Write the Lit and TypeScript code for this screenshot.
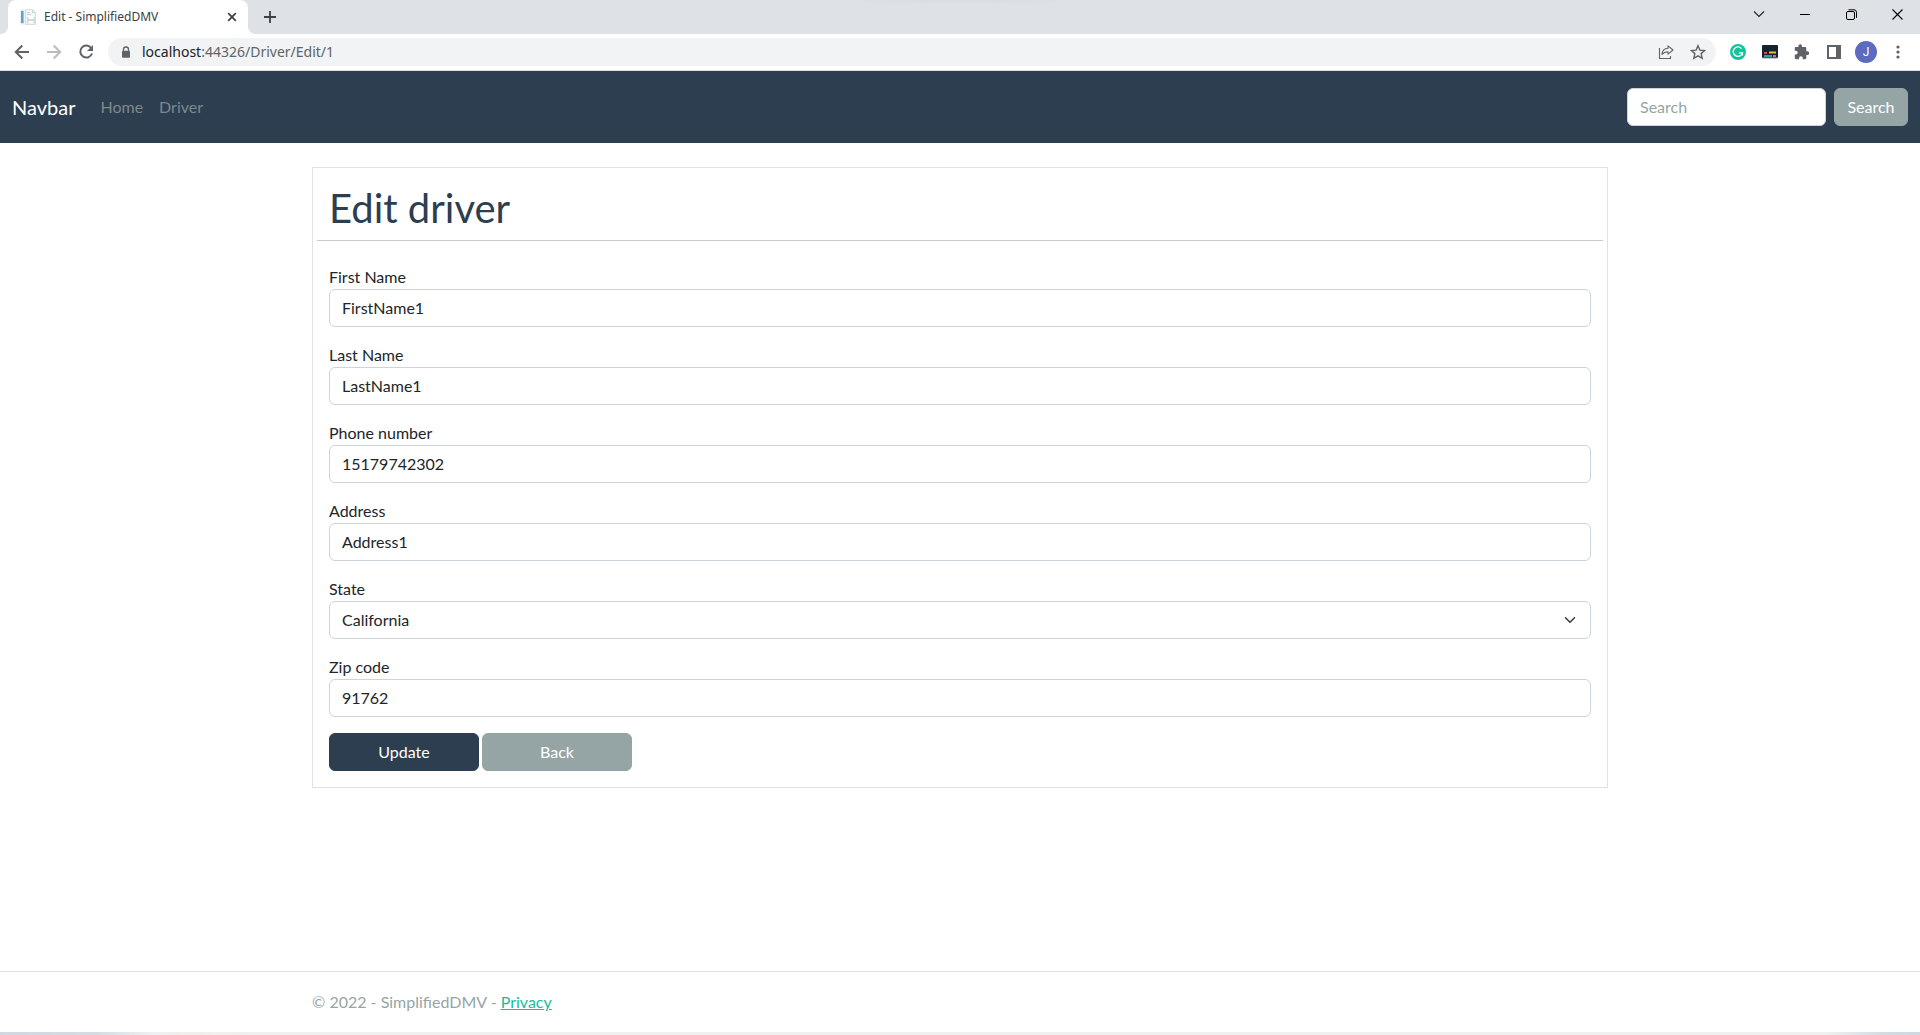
import { LitElement, html, css, svg } from "lit";
import { customElement } from "lit/decorators.js";

interface Field {
  id: string;
  label: string;
  value: string;
  options?: string[];
}

const FIELDS: Field[] = [
  { id: "first-name", label: "First Name", value: "FirstName1" },
  { id: "last-name", label: "Last Name", value: "LastName1" },
  { id: "phone", label: "Phone number", value: "15179742302" },
  { id: "address", label: "Address", value: "Address1" },
  { id: "state", label: "State", value: "California", options: ["California"] },
  { id: "zip", label: "Zip code", value: "91762" },
];

const icon = (size: number, body: unknown) => html`
  <svg width=${size} height=${size} viewBox="0 0 ${size} ${size}" fill="none" aria-hidden="true">${body}</svg>
`;

const ICONS = {
  page: icon(16, svg`
    <path d="M5.500 .5h7l3 3v12h-10z" fill="#f4f6f8" stroke="#d8dee4"/>
    <path d="M.5 .5h4v15h-4z" fill="#e3e9ee"/><path d="M1 2h2.500v12H1z" fill="#5ba3d4"/>
    <path d="M7 3.500h3M7 5.500h4M12.500 1v2.500h3" stroke="#c8d1da"/>
    <path d="M7 8h8.500v6.500H7z" fill="#d3d9e0"/><path d="M8.500 7h5v3h-5zM8.500 12h5v2.500h-5z" fill="#fff"/>`),
  close: icon(10, svg`<path d="M1.200 1.200l7.600 7.600M8.800 1.200L1.200 8.800" stroke="#3c4043" stroke-width="1.700"/>`),
  plus: icon(12, svg`<path d="M6 0v12M0 6h12" stroke="#3c4043" stroke-width="1.800"/>`),
  chevron: icon(12, svg`<path d="M1 3.500l5 5 5-5" stroke="#202124" stroke-width="1.100"/>`),
  minimize: icon(10, svg`<path d="M0 5.500h10" stroke="#000"/>`),
  restore: icon(11, svg`
    <rect x=".5" y="2.500" width="8" height="8" rx="1.500" stroke="#000"/>
    <path d="M2.500 .8h5.500a2.500 2.500 0 0 1 2.500 2.500v5.500" stroke="#000"/>`),
  exit: icon(11, svg`<path d="M.5 .5l10 10M10.500 .5l-10 10" stroke="#000" stroke-width="1.100"/>`),
  back: icon(16, svg`<path d="M15 8H2M8.300 1.500L1.800 8l6.500 6.500" stroke="#5f6368" stroke-width="2"/>`),
  forward: icon(16, svg`<path d="M1 8h13M7.700 1.500L14.200 8l-6.500 6.500" stroke="#babcbe" stroke-width="2"/>`),
  reload: icon(16, svg`
    <path d="M13.300 4.200A6 6 0 1 0 14 9.500" stroke="#5f6368" stroke-width="2"/>
    <path d="M15 1v6H9z" fill="#5f6368"/>`),
  lock: icon(12, svg`
    <path d="M3.500 5V3.500a2.500 2.500 0 0 1 5 0V5" stroke="#5f6368" stroke-width="1.300"/>
    <rect x="2" y="4.700" width="8" height="7" rx="1" fill="#5f6368"/>`),
  share: icon(16, svg`
    <path d="M1.500 4v10.500h11V12" stroke="#5f6368" stroke-width="1.100"/>
    <path d="M4 10.500C4.300 6.500 6.500 4.500 10 4.300V1.800l5 4.200-5 4.200V7.700C7.300 7.700 5.500 8.500 4 10.500z" stroke="#5f6368" stroke-width="1.100" stroke-linejoin="round"/>`),
  star: icon(16, svg`<path d="M8 1.700l1.900 4.400 4.800.4-3.600 3.100 1.100 4.700L8 11.800l-4.200 2.500 1.100-4.700L1.300 6.500l4.800-.4z" stroke="#5f6368" stroke-width="1.400"/>`),
  grammar: icon(16, svg`
    <circle cx="8" cy="8" r="8" fill="#15c39a"/>
    <path d="M11.500 4.600A4.700 4.700 0 1 0 12.500 8.800H9M12.400 8.800v2.700" stroke="#fff" stroke-width="1.300"/>`),
  captions: icon(16, svg`
    <rect y="1" width="16" height="13" rx="1" fill="#14232e"/><path d="M.5 14h15" stroke="#8e9499"/>
    <path d="M2 9h3" stroke="#e8424f" stroke-width="2"/><path d="M7 8.500h7" stroke="#f5b731" stroke-width="2"/>
    <path d="M2 12h8" stroke="#3f9b9c" stroke-width="2"/><path d="M11 12h3" stroke="#b375b8" stroke-width="2"/>`),
  puzzle: icon(16, svg`<path d="M13.300 7.300h-1V4.200c0-.7-.6-1.200-1.300-1.200H8V2a1.800 1.800 0 0 0-3.600 0v1H2C1.300 3 .8 3.500.8 4.200v2.500h1a1.900 1.900 0 0 1 0 3.800h-1V14c0 .7.500 1.200 1.200 1.200h3v-1a1.900 1.900 0 0 1 3.800 0v1H11c.7 0 1.300-.5 1.300-1.200v-3h1a1.800 1.800 0 0 0 0-3.700z" fill="#5f6368"/>`),
  panel: icon(14, svg`<path d="M1 1h12v12H1z" stroke="#5f6368" stroke-width="2"/><path d="M9 1h4v12H9z" fill="#5f6368"/>`),
  more: icon(16, svg`<g fill="#5f6368"><circle cx="8" cy="3" r="1.600"/><circle cx="8" cy="8" r="1.600"/><circle cx="8" cy="13" r="1.600"/></g>`),
};

const iconButton = (label: string, glyph: unknown) =>
  html`<button class="icon-button" type="button" aria-label=${label}>${glyph}</button>`;

@customElement("browser-chrome")
export class BrowserChrome extends LitElement {
  static styles = css`
    :host { display: block; font-family: "Noto Sans", sans-serif; }
    * { box-sizing: border-box; }
    svg { display: block; }
    .icon-button {
      display: flex; align-items: center; justify-content: center;
      width: 32px; height: 28px; padding: 0; border: 0; background: none;
    }
    .strip {
      display: flex; height: 34px; padding-left: 8px;
      background: radial-gradient(ellipse 120px 4px at 50% 0, #d7dade, #dee1e6);
    }
    .tab {
      position: relative; display: flex; align-items: center; gap: 8px;
      width: 240px; padding: 0 6px 0 12px; border-radius: 8px 8px 0 0; background: #fff;
    }
    .tab::before, .tab::after {
      content: ""; position: absolute; bottom: 0; width: 8px; height: 8px;
    }
    .tab::before { right: 100%; background: radial-gradient(circle at 0 0, transparent 8px, #fff 8px); }
    .tab::after { left: 100%; background: radial-gradient(circle at 100% 0, transparent 8px, #fff 8px); }
    .tab .icon-button { width: 20px; }
    .title { flex: 1; font-size: 12px; line-height: 16px; color: #3c4043; white-space: nowrap; }
    .new-tab { display: flex; align-items: center; padding-left: 6px; }
    .window { display: flex; margin-left: auto; }
    .window .icon-button { width: 46px; }
    .toolbar {
      display: flex; align-items: center; height: 37px; padding: 0 6px;
      border-bottom: 1px solid #dadce0; background: #fff;
    }
    .omnibox {
      flex: 1; display: flex; align-items: center; height: 28px; margin: 0 6px;
      padding: 0 2px 0 12px; border-radius: 14px; background: #f1f3f4;
    }
    .url { flex: 1; margin-left: 10px; font-size: 14px; line-height: 20px; color: #5f6368; }
    .host { color: #202124; }
    .avatar {
      display: block; width: 22px; height: 22px; border-radius: 11px;
      background: #5c6bc0; color: #fff; font: 12px/22px Roboto, sans-serif;
    }
  `;

  render() {
    return html`
      <div class="strip">
        <div class="tab">
          ${ICONS.page}
          <span class="title">Edit - SimplifiedDMV</span>
          ${iconButton("Close tab", ICONS.close)}
        </div>
        <div class="new-tab">${iconButton("New tab", ICONS.plus)}</div>
        <div class="window">
          ${iconButton("Search tabs", ICONS.chevron)} ${iconButton("Minimize", ICONS.minimize)}
          ${iconButton("Restore", ICONS.restore)} ${iconButton("Close", ICONS.exit)}
        </div>
      </div>
      <div class="toolbar">
        ${iconButton("Back", ICONS.back)} ${iconButton("Forward", ICONS.forward)}
        ${iconButton("Reload", ICONS.reload)}
        <div class="omnibox">
          ${ICONS.lock}
          <span class="url"><span class="host">localhost</span>:44326/Driver/Edit/1</span>
          ${iconButton("Share", ICONS.share)} ${iconButton("Bookmark", ICONS.star)}
        </div>
        ${iconButton("Writing assistant", ICONS.grammar)} ${iconButton("Captions", ICONS.captions)}
        ${iconButton("Extensions", ICONS.puzzle)} ${iconButton("Side panel", ICONS.panel)}
        ${iconButton("Profile", html`<span class="avatar">J</span>`)} ${iconButton("Menu", ICONS.more)}
      </div>
    `;
  }
}

@customElement("app-root")
export class AppRoot extends LitElement {
  static styles = css`
    :host {
      display: flex; flex-direction: column; min-height: 100vh;
      background: #fff; color: #212529; font: 16px/24px Lato, sans-serif;
    }
    * { box-sizing: border-box; }
    .navbar {
      display: flex; align-items: center; height: 72px; padding: 0 12px; background: #2c3e50;
    }
    .brand { margin-right: 17px; color: #fff; font-size: 20px; line-height: 30px; text-decoration: none; }
    .nav-link { padding: 8px; color: #7b8a8b; text-decoration: none; }
    .search { display: flex; gap: 8px; margin-left: auto; }
    .search .control { width: 199px; }
    .search .button { min-width: 74px; }
    .control {
      display: block; width: 100%; height: 38px; margin: 0; padding: 5px 12px 7px;
      border: 1px solid #ced4da; border-radius: 6px; background: #fff;
      color: #212529; font: inherit; appearance: none;
    }
    .control::placeholder { color: #95a5a6; opacity: 1; }
    .select { display: grid; align-items: center; }
    .select > * { grid-area: 1 / 1; }
    .select .control { padding: 6px 12px; }
    .arrow { justify-self: end; margin-right: 13px; pointer-events: none; }
    .button {
      height: 38px; padding: 6px 12px; border: 1px solid #95a5a6; border-radius: 6px;
      background: #95a5a6; color: #fff; font: inherit; line-height: 24px;
      text-align: center; text-decoration: none;
    }
    .primary { border-color: #2c3e50; background: #2c3e50; }
    .container { width: 100%; max-width: 1320px; margin: 0 auto; padding: 0 12px; }
    .main { flex: 1; }
    .card { margin-top: 24px; padding: 16px 4px; border: 1px solid #dee2e6; }
    .heading {
      margin: 0; padding: 0 12px 8px; border-bottom: 1px solid #c8c9ca;
      color: #2c3e50; font-size: 40px; line-height: 48px; font-weight: 400;
    }
    .form { display: grid; gap: 16px; padding: 24px 12px 0; }
    .label { display: block; }
    .actions { display: flex; gap: 3px; }
    .actions .button { width: 150px; }
    .footer { border-top: 1px solid #dee2e6; color: #95a5a6; line-height: 60px; }
    .privacy { color: #18bc9c; }
    .edge {
      height: 3px;
      background: linear-gradient(90deg, #cfd8e2, #d3dce5 5%, #eef0f3 8%, #f2eeea 10%, #f0f0f0 15%, #f0f0f0 95%, #d3dce5 98%, #ced8e2);
    }
  `;

  private control(f: Field) {
    if (!f.options) return html`<input class="control" id=${f.id} type="text" .value=${f.value} />`;
    return html`
      <div class="select">
        <select class="control" id=${f.id}>
          ${f.options.map((o) => html`<option ?selected=${o === f.value}>${o}</option>`)}
        </select>
        <svg class="arrow" width="16" height="12" viewBox="0 0 16 16" fill="none" aria-hidden="true">
          <path d="M2 5l6 6 6-6" stroke="#343a40" stroke-width="2" stroke-linecap="round" stroke-linejoin="round" />
        </svg>
      </div>
    `;
  }

  render() {
    return html`
      <browser-chrome></browser-chrome>
      <nav class="navbar">
        <a class="brand" href="#">Navbar</a>
        <a class="nav-link" href="#">Home</a>
        <a class="nav-link" href="#">Driver</a>
        <form class="search" role="search">
          <input class="control" type="search" placeholder="Search" aria-label="Search" />
          <button class="button" type="button">Search</button>
        </form>
      </nav>
      <main class="main container">
        <section class="card">
          <h1 class="heading">Edit driver</h1>
          <form class="form">
            ${FIELDS.map((f) => html`
              <div>
                <label class="label" for=${f.id}>${f.label}</label>
                ${this.control(f)}
              </div>
            `)}
            <div class="actions">
              <button class="button primary" type="button">Update</button>
              <a class="button" href="#">Back</a>
            </div>
          </form>
        </section>
      </main>
      <footer class="footer">
        <div class="container">© 2022 - SimplifiedDMV - <a class="privacy" href="#">Privacy</a></div>
      </footer>
      <div class="edge"></div>
    `;
  }
}
